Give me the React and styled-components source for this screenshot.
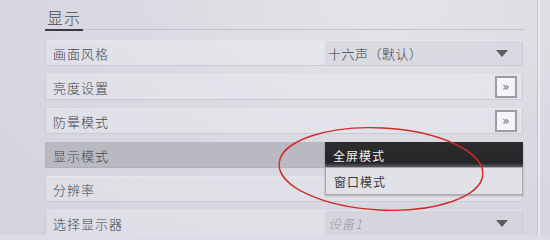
import React from "react";
import styled, { createGlobalStyle } from "styled-components";

const GlobalStyle = createGlobalStyle`
  html, body {
    margin: 0;
    padding: 0;
  }
  body {
    font-family: "Noto Sans CJK SC", "Noto Sans", sans-serif;
    background: #dcdce4;
  }
`;

const Page = styled.div`
  position: relative;
  width: 550px;
  height: 235px;
  overflow: hidden;
  background: radial-gradient(ellipse at 70% 0%, #e4e4ea 0%, #dadae2 45%, #d3d3dc 100%);
  display: flex;
`;

const Panel = styled.div`
  width: 478px;
  padding: 5px 14px 0 45px;
  border-right: 1px solid #c4c4cc;
  box-shadow: 2px 0 0 #ebebf0;
`;

const Header = styled.div`
  height: 24px;
  border-bottom: 1px solid #c3c3cb;
  margin-right: -2px;
`;

const Title = styled.div`
  display: inline-block;
  height: 25px;
  padding: 0 2px;
  box-sizing: border-box;
  white-space: nowrap;
  font-size: 16px;
  font-weight: 300;
  line-height: 22px;
  letter-spacing: 1px;
  color: #4a4a50;
  border-bottom: 2px solid #3a3a40;
`;

const List = styled.div`
  display: flex;
  flex-direction: column;
  gap: 8px;
  margin-top: 10px;
`;

const Row = styled.div`
  height: 26px;
  box-sizing: border-box;
  display: flex;
  align-items: center;
  justify-content: space-between;
  border: 1px solid ${(p) => (p.$active ? "#b0b0b8" : "#cbcbd3")};
  border-top-color: ${(p) => (p.$active ? "#b8b8c0" : "#e6e6ec")};
  background: ${(p) => (p.$active ? "#b9b9c2" : "rgba(240, 240, 246, 0.35)")};
`;

const Label = styled.span`
  padding-left: 7px;
  font-size: 13px;
  font-weight: 300;
  color: #45454b;
  letter-spacing: 1px;
`;

const Select = styled.div`
  position: relative;
  align-self: stretch;
  width: 197px;
  display: flex;
  align-items: center;
  justify-content: space-between;
  background: ${(p) => (p.$plain ? "transparent" : "rgba(150, 150, 165, 0.14)")};
`;

const Value = styled.span`
  padding-left: 3px;
  font-size: 13px;
  font-weight: 300;
  color: ${(p) => (p.$muted ? "#9c9ca4" : "#3a3a40")};
  font-style: ${(p) => (p.$muted ? "italic" : "normal")};
  letter-spacing: 0.5px;
`;

const Caret = styled.span`
  width: 0;
  height: 0;
  margin-right: 14px;
  border-left: 6px solid transparent;
  border-right: 6px solid transparent;
  border-top: 7px solid #5c5c62;
`;

const NextButton = styled.button`
  width: 22px;
  height: 22px;
  margin-right: 5px;
  padding: 0;
  box-sizing: border-box;
  border: 2px solid #9c9ca2;
  background: #f5f5f7;
  color: #6a6a70;
  font-family: "DejaVu Sans", sans-serif;
  font-size: 12px;
  line-height: 16px;
  display: flex;
  align-items: center;
  justify-content: center;
`;

const Menu = styled.div`
  position: absolute;
  left: 0;
  top: -1px;
  width: 198px;
  z-index: 2;
  box-shadow: 0 1px 2px rgba(0, 0, 0, 0.25);
`;

const MenuItem = styled.div`
  box-sizing: border-box;
  display: flex;
  align-items: center;
  padding-left: 8px;
  font-size: 12px;
  letter-spacing: 1px;
  color: ${(p) => (p.$selected ? "#f2f2f2" : "#3a3a40")};
  background: ${(p) =>
    p.$selected
      ? "linear-gradient(180deg, #2c2c2e 0%, #262628 80%, #5a5a5e 95%, #d8d8de 100%)"
      : "#e1e1e8"};
  border: ${(p) => (p.$selected ? "none" : "1px solid #a8a8b0")};
  border-top: none;
  height: ${(p) => (p.$selected ? "26px" : "27px")};
`;

const Mark = styled.svg`
  position: absolute;
  left: 0;
  top: 0;
  pointer-events: none;
  z-index: 3;
`;

const rows = [
  { label: "画面风格", kind: "select", value: "十六声（默认）" },
  { label: "亮度设置", kind: "button" },
  { label: "防晕模式", kind: "button" },
  { label: "显示模式", kind: "menu", active: true },
  { label: "分辨率", kind: "none" },
  { label: "选择显示器", kind: "select", value: "设备1", muted: true },
];

export default function App() {
  return (
    <>
      <GlobalStyle />
      <Page>
        <Panel>
          <Header>
            <Title>显示</Title>
          </Header>
          <List>
            {rows.map((r) => (
              <Row key={r.label} $active={r.active}>
                <Label>{r.label}</Label>
                {r.kind === "select" && (
                  <Select>
                    <Value $muted={r.muted}>{r.value}</Value>
                    <Caret />
                  </Select>
                )}
                {r.kind === "button" && <NextButton>»</NextButton>}
                {r.kind === "menu" && (
                  <Select $plain>
                    <Menu>
                      <MenuItem $selected>全屏模式</MenuItem>
                      <MenuItem>窗口模式</MenuItem>
                    </Menu>
                  </Select>
                )}
              </Row>
            ))}
          </List>
        </Panel>
        <Mark width="550" height="235">
          <ellipse
            cx="381"
            cy="169"
            rx="102"
            ry="41"
            fill="none"
            stroke="#d42a2a"
            strokeWidth="1.4"
            transform="rotate(3 381 169)"
          />
        </Mark>
      </Page>
    </>
  );
}
